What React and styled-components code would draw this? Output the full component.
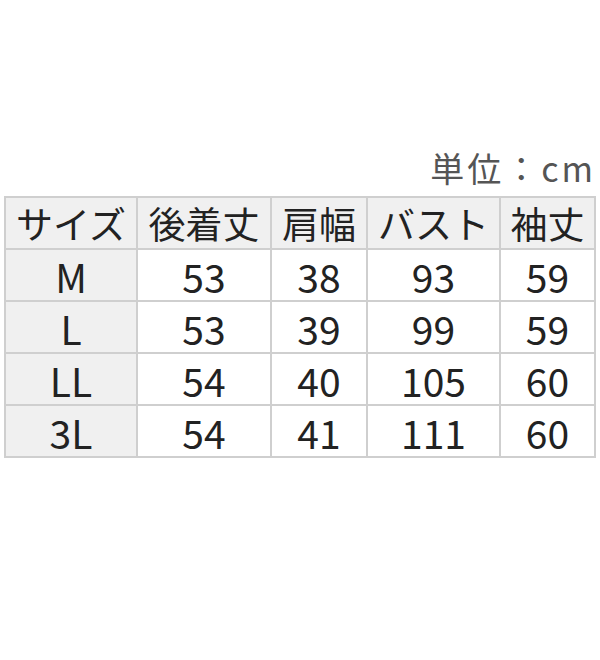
import React from 'react'
import styled, { createGlobalStyle } from 'styled-components'

const Global = createGlobalStyle`
  body {
    margin: 0;
    background: #fff;
    font-family: "Noto Sans CJK JP", "Noto Sans", sans-serif;
  }
`

const Page = styled.div`
  width: 600px;
  height: 660px;
  padding: 146px 4px 0 4px;
  box-sizing: border-box;
`

const Unit = styled.div`
  text-align: right;
  font-size: 34px;
  line-height: 44px;
  color: #555;
  padding-right: 0;
  margin-bottom: 6px;
  letter-spacing: 3px;
`

const Table = styled.div`
  display: grid;
  grid-template-columns: 130px 132px 94px 131px 93px;
  grid-auto-rows: 50px;
  gap: 2px;
  padding: 2px;
  background: #cfcfcf;
  width: 592px;
  box-sizing: border-box;
`

const Cell = styled.div`
  display: flex;
  align-items: center;
  justify-content: center;
  background: ${p => (p.$head ? '#f0f0f0' : '#fff')};
  color: #222;
  font-size: ${p => (p.$cjk ? '37px' : '39px')};
  line-height: 1;
  padding-top: ${p => (p.$cjk ? '0' : '2px')};
`

const header = ['サイズ', '後着丈', '肩幅', 'バスト', '袖丈']
const rows = [
  ['M', '53', '38', '93', '59'],
  ['L', '53', '39', '99', '59'],
  ['LL', '54', '40', '105', '60'],
  ['3L', '54', '41', '111', '60'],
]

export default function App() {
  return (
    <Page>
      <Global />
      <Unit>単位：cm</Unit>
      <Table>
        {header.map(h => (
          <Cell key={h} $head $cjk>{h}</Cell>
        ))}
        {rows.map(r =>
          r.map((v, i) => (
            <Cell key={r[0] + i} $head={i === 0}>{v}</Cell>
          ))
        )}
      </Table>
    </Page>
  )
}
